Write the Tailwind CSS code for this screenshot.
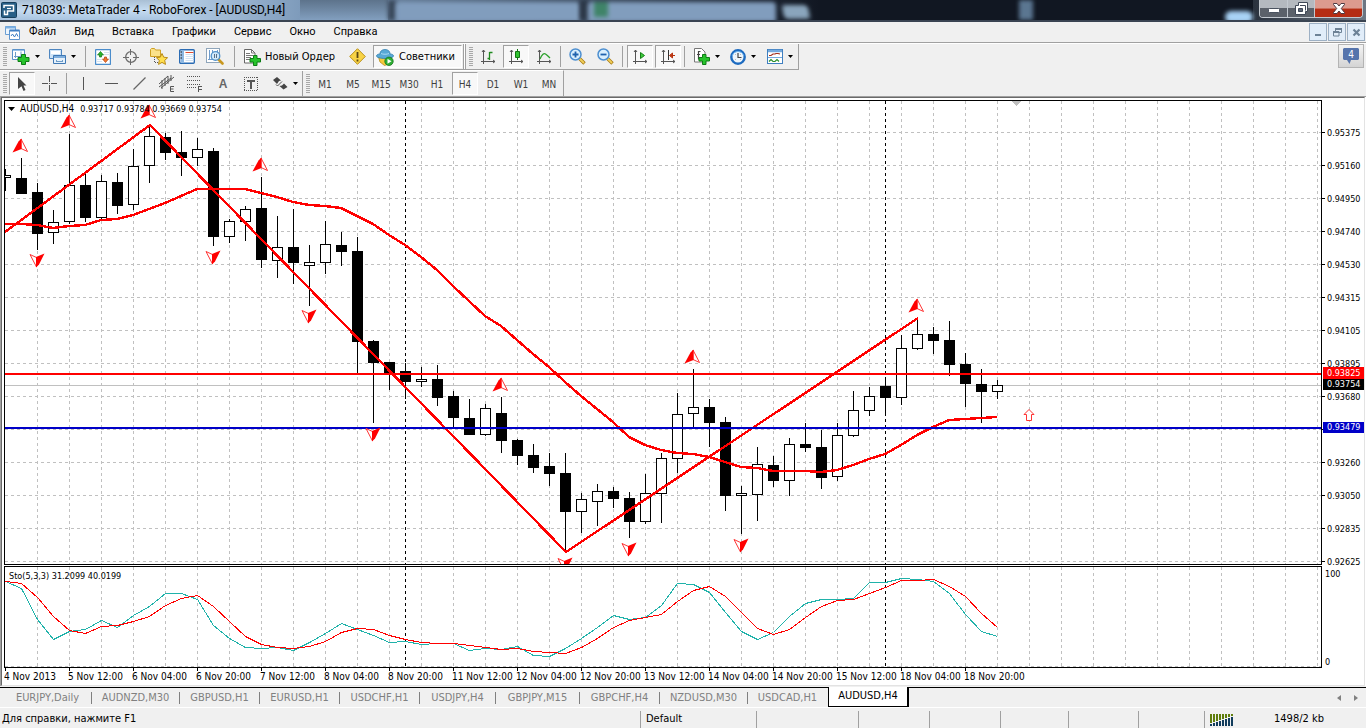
<!DOCTYPE html>
<html lang="ru">
<head>
  <meta charset="UTF-8">
  <meta name="viewport" content="width=device-width, initial-scale=1.0">
  <title>718039: MetaTrader 4 - RoboForex - [AUDUSD,H4]</title>
  <script src="https://cdn.jsdelivr.net/npm/@tailwindcss/browser@4"></script>
</head>
<body class="flex min-h-screen flex-col overflow-hidden bg-[#f0f0f0] font-['DejaVu_Sans_Condensed','DejaVu_Sans',sans-serif] text-[11px] text-black">

  <!-- Title bar -->
  <header class="relative flex h-[22px] items-center justify-between overflow-hidden border-b-2 border-[#3a4452] bg-[#111722]">
    <!-- Blurred browser tabs behind the glass -->
    <div class="absolute inset-0 flex bg-linear-to-r from-[#7e9bbb] from-20% to-transparent to-60%" aria-hidden="true">
      <div class="h-full w-[170px] bg-linear-to-b from-[#a9bfd4] via-[#c6dcf1] to-[#a8c4e0]"></div>
      <div class="h-full w-[130px] bg-linear-to-r from-[#b9d1e8] to-[#7e9bbb]"></div>
      <div class="h-full w-[88px] bg-linear-to-b from-[#5d738b] to-[#829fbf]"></div>
      <div class="h-full w-[8px] bg-[#39475a] blur-[2px]"></div>
      <div class="mt-[2px] h-full w-[184px] rounded-t bg-[#819dbd] blur-[2px]"></div>
      <div class="h-full w-[8px] bg-[#2b3646] blur-[2px]"></div>
      <div class="mt-[2px] flex h-full w-[188px] rounded-t bg-[#819dbd] blur-[2px]"><span class="ml-[6px] h-[15px] w-[14px] bg-[#3f8468]"></span></div>
      <div class="mt-[5px] ml-[7px] h-[14px] w-[26px] skew-x-12 rounded bg-[#8aa5bc] blur-[2px]"></div>
      <div class="ml-[210px] h-full w-[14px] bg-[#5b7691] blur-[2px]"></div>
      <div class="mt-[11px] ml-[192px] h-[12px] w-[28px] rounded-full bg-[#a8d2f5] blur-[2px]"></div>
      <div class="h-full flex-1 bg-linear-to-r from-[#2a323e] to-[#6d7784]"></div>
    </div>
    <div class="relative flex items-center">
      <svg class="ml-px h-[16px] w-[16px]" viewBox="0 0 16 16">
        <rect x=".5" y=".5" width="15" height="15" rx="1" fill="#275f87" stroke="#173f5c"/>
        <path d="M3 6V3.500h9.500v5.500H6.500v3.500H3.500V8.500" fill="none" stroke="#fff" stroke-width="1.5"/>
        <path d="M6 6.500h4" stroke="#fff" stroke-width="1.2"/>
      </svg>
      <h1 class="ml-[5px] font-[Roboto,sans-serif] text-[12px] leading-[16px] whitespace-nowrap">718039: MetaTrader 4 - RoboForex - [AUDUSD,H4]</h1>
    </div>
    <div class="relative mr-[3px] flex h-[18px] self-start overflow-hidden rounded-b-[4px] border border-t-0 border-[#c3c9d0] bg-[#3c424b]">
      <button aria-label="Minimize" class="flex w-[28px] items-center justify-center border-r border-[#c3c9d0] bg-linear-to-b from-[#b4b9bf] from-50% to-[#5b616a] to-50%">
        <svg class="mt-[4px] h-[5px] w-[12px]" viewBox="0 0 12 5"><rect x=".5" y=".5" width="11" height="4" rx="1" fill="#fff" stroke="#4a5360"/></svg>
      </button>
      <button aria-label="Restore" class="flex w-[27px] items-center justify-center border-r border-[#c3c9d0] bg-linear-to-b from-[#b4b9bf] from-50% to-[#5b616a] to-50%">
        <svg class="h-[13px] w-[13px]" viewBox="0 0 13 13"><path d="M3.500.5h9v9h-2v3h-10v-9h3z" fill="#fff" stroke="#3f4857"/><path d="M3.500 6.500h4v3h-4z" fill="#5f6878" stroke="#3f4857"/><path d="M5 3.500h5.500v5" fill="none" stroke="#3f4857"/></svg>
      </button>
      <button aria-label="Close" class="flex w-[47px] items-center justify-center bg-linear-to-b from-[#dc9a8e] from-45% to-[#b52d14] to-55%">
        <svg class="h-[11px] w-[12px]" viewBox="0 0 12 11"><path d="M.5.5h3.500L6 3 8 .5h3.500v1L8.300 5.500l3.200 4v1H8l-2-2.500-2 2.500H.5v-1l3.200-4L.5 1.500z" fill="#fff" stroke="#4c3a42"/></svg>
      </button>
    </div>
  </header>

  <!-- Menu -->
  <nav class="flex h-[21px] items-center border-b border-[#a0a0a0] font-[Roboto,sans-serif] text-[11px]">
    <svg class="ml-[5px] h-[15px] w-[15px]" viewBox="0 0 15 15">
      <path d="M.5 1.500h10v8H.5z" fill="#eef6fd" stroke="#6b9fd4"/><path d="M.5 1.500h10v2H.5z" fill="#7db0e2"/>
      <path d="M4.500 5.500h10v9h-10z" fill="#fff" stroke="#5d95cf"/><path d="M4.500 5.500h10" stroke="#3f7fc4" stroke-width="2"/>
      <path d="M6 11l1.500-2 2 3 2-3.500 1.500 3" fill="none" stroke="#3f7fc4"/>
    </svg>
    <div class="flex flex-1">
      <a href="#" class="px-[9px]">Файл</a>
      <a href="#" class="px-[9px]">Вид</a>
      <a href="#" class="px-[9px]">Вставка</a>
      <a href="#" class="px-[9px]">Графики</a>
      <a href="#" class="px-[9px]">Сервис</a>
      <a href="#" class="px-[9px]">Окно</a>
      <a href="#" class="px-[9px]">Справка</a>
    </div>
    <div class="flex gap-px">
      <button aria-label="Minimize chart" class="flex h-[18px] w-[18px] items-center justify-center border border-[#9db0c4] bg-[#e1edf9]"><svg class="h-[9px] w-[9px]" viewBox="0 0 9 9"><path d="M1 7h6" stroke="#6d8296" stroke-width="2"/></svg></button>
      <button aria-label="Restore chart" class="flex h-[18px] w-[18px] items-center justify-center border border-[#9db0c4] bg-[#e1edf9]"><svg class="h-[9px] w-[9px]" viewBox="0 0 9 9"><path d="M2.500 3V.5h6v4H6M.5 3.500h5.500v4.500H.5z" fill="none" stroke="#6d8296"/><path d="M2 1h7M0 4h6" stroke="#6d8296" stroke-width="2"/></svg></button>
      <button aria-label="Close chart" class="mr-px flex h-[18px] w-[18px] items-center justify-center border border-[#9db0c4] bg-[#e1edf9]"><svg class="h-[9px] w-[9px]" viewBox="0 0 9 9"><path d="M1.500 1.500l6 6M7.500 1.500l-6 6" stroke="#6d8296" stroke-width="2.200"/></svg></button>
    </div>
  </nav>

  <!-- Toolbars -->
  <div class="flex justify-between border-t border-white">
    <div class="flex flex-col items-start">
      <div class="flex h-[26px] items-stretch border-r border-b border-[#a0a0a0] pr-[2px]">
        <span class="my-[3px] ml-[3px] w-[4px] bg-[repeating-linear-gradient(#a8a8a8_0_1px,#f0f0f0_1px_2px)]"></span>
        <button aria-label="New chart" class="flex w-[37px] items-center gap-[5px] pl-[5px]">
          <svg class="h-[17px] w-[18px]" viewBox="0 0 18 17"><path d="M.5 1.500h12v10H.5z" fill="#fff" stroke="#5b92c9"/><path d="M1 2.500h11" stroke="#9cc3e8"/><path d="M3.500 4v6M2 8.500h8M9 3.500v5" stroke="#6d9cc8"/><path d="M9.500 6.500h4v3h3.500v4h-3.500v3h-4v-3H6v-4h3.500z" fill="#27c32c" stroke="#0d7d14"/></svg>
          <svg class="h-[3px] w-[5px]" viewBox="0 0 5 3"><path d="M0 0h5L2.500 3z"/></svg>
        </button>
        <button aria-label="Profiles" class="flex w-[37px] items-center gap-[5px] pl-[5px]">
          <svg class="h-[16px] w-[17px]" viewBox="0 0 17 16"><path d="M.5.5h12v9H.5z" fill="#cfe4f7" stroke="#4e86c0"/><path d="M2 3.500h9" stroke="#fff" stroke-width="3"/><path d="M4.500 6.500h12v8h-12z" fill="#e6f1fb" stroke="#3f78b4"/><path d="M5 8h11" stroke="#7eaedd" stroke-width="2"/><path d="M7 12.500h7M7.500 11v2M13.500 11v2" stroke="#6d9cc8"/></svg>
          <svg class="h-[3px] w-[5px]" viewBox="0 0 5 3"><path d="M0 0h5L2.500 3z"/></svg>
        </button>
        <span class="my-[2px] mr-[3px] ml-[4px] w-px bg-[#a0a0a0]"></span>
        <button aria-label="Market watch" class="flex w-7 items-center justify-center">
          <svg class="h-[16px] w-[16px]" viewBox="0 0 16 16"><rect x=".5" y=".5" width="15" height="15" rx="1" fill="#fff" stroke="#4a8ccb" stroke-width="1.400"/><path d="M9 3.500h5M9 5.500h5M2 10.500h5M2 12.500h5" stroke="#d5e3f0"/><path d="M5.500 2.500l3 3.500H6.500v2h-2V6h-2z" fill="#2bb52b" stroke="#12761a" stroke-width=".7"/><path d="M10.500 13.500l3-3.500h-2V8h-2v2h-2z" fill="#ef7a2e" stroke="#b43c10" stroke-width=".7"/></svg>
        </button>
        <button aria-label="Data window" class="flex w-7 items-center justify-center">
          <svg class="h-[16px] w-[16px]" viewBox="0 0 16 16" fill="none" stroke="#6b6b6b"><circle cx="8" cy="8" r="5.300" stroke-width="1.300"/><path d="M7.500 0v6M7.500 10v6M0 8.500h6M10 8.500h6"/></svg>
        </button>
        <button aria-label="Navigator" class="flex w-7 items-center justify-center">
          <svg class="h-[17px] w-[18px]" viewBox="0 0 18 17"><path d="M.5 8.500v-7l1-1h3l1 1.500h5v6.500z" fill="#fbe28a" stroke="#cfa022"/><path d="M4.500 9v5.500h4" fill="none" stroke="#555" stroke-dasharray="1 1"/><path d="M12 5.500l1.700 3.700 3.900.5-2.900 2.700.8 4-3.500-2-3.500 2 .8-4-2.900-2.700 3.900-.5z" fill="#ffdf4f" stroke="#b98a17"/></svg>
        </button>
        <button aria-label="Terminal" class="flex w-7 items-center justify-center">
          <svg class="h-[15px] w-[16px]" viewBox="0 0 16 15"><rect x=".7" y=".7" width="14.600" height="13.600" rx="1" fill="#fff" stroke="#2b6cb4" stroke-width="1.400"/><path d="M3.500 1v13" stroke="#8db8e2" stroke-width="3"/><path d="M1.500 3h1.500M1.500 6h1.500M1.500 9h1.500" stroke="#222"/><path d="M6.500 3.500h8" stroke="#e04b2f"/><path d="M6.500 5.500h8M6.500 7.500h8M6.500 9.500h8M6.500 11.500h8" stroke="#d3e2f2"/></svg>
        </button>
        <button aria-label="Strategy tester" class="flex w-7 items-center justify-center">
          <svg class="h-[17px] w-[18px]" viewBox="0 0 18 17"><rect x=".5" y=".5" width="13" height="14" fill="#fff" stroke="#8fa5ba"/><path d="M3.500 2v10M6.500 2v3M11.500 2v5M2 11.500h10" stroke="#6f9ccc"/><path d="M12.500 11.500l4 4" stroke="#c99820" stroke-width="2.600" stroke-linecap="round"/><circle cx="9.500" cy="8" r="4.300" fill="#cbe6fa" fill-opacity=".85" stroke="#4f90c9" stroke-width="1.300"/><path d="M8.500 6v4M10.500 6v4" stroke="#5a6f86"/></svg>
        </button>
        <span class="my-[2px] mr-[3px] ml-[5px] w-px bg-[#a0a0a0]"></span>
        <button class="flex w-[106px] items-center gap-[4px] pt-px pl-[6px] whitespace-nowrap">
          <svg class="h-[17px] w-[17px]" viewBox="0 0 17 17"><path d="M.5.5h7l3.500 3.500v10H.5z" fill="#fff" stroke="#666"/><path d="M7.500.5V4H11M2 4.500h4M2 6.500h7M2 8.500h5M2 10.500h4" fill="none" stroke="#777"/><path d="M9.500 6.500h3.500v3h3.500v3.500H13v3.500H9.500V13H6V9.500h3.500z" fill="#27c32c" stroke="#0d7d14"/></svg>
          Новый Ордер
        </button>
        <button aria-label="MetaEditor" class="flex w-[26px] items-center justify-center">
          <svg class="h-[17px] w-[17px]" viewBox="0 0 17 17"><path d="M8.500.7l7.800 7.800-7.800 7.800L.7 8.500z" fill="#f8d345" stroke="#b8901c"/><path d="M8.500 4v6M8.500 11.500v2" stroke="#5b4712" stroke-width="1.800"/></svg>
        </button>
        <button class="my-px ml-[3px] flex w-[89px] items-center gap-[5px] border border-r-white border-b-white border-l-[#a0a0a0] border-t-[#a0a0a0] bg-[#f8f8f8] pt-px pl-[2px]">
          <svg class="h-[17px] w-[18px]" viewBox="0 0 18 17"><path d="M2.500 8l1.500 5 4.500 3.500 4-1.500 3-7z" fill="#f3c93b" stroke="#b98e1c" stroke-width=".8"/><path d="M4 5C4 1.500 7 .5 9 .5S14 1.500 14 5c2 0 3.500.8 3.500 2 0 1.500-4 2.500-8.500 2.500S.5 8.500.5 7C.5 5.800 2 5 4 5z" fill="#58a9d6" stroke="#2d7cad" stroke-width=".8"/><path d="M5 4.500c2 1 6 1 8 0" stroke="#a8daf3" fill="none"/><circle cx="13" cy="12.300" r="4.200" fill="#2eae34" stroke="#15761c" stroke-width=".8"/><path d="M11.500 9.800l4 2.500-4 2.500z" fill="#fff"/></svg>
          Советники
        </button>
        <span class="ml-px w-[3px] border-x border-[#a0a0a0] bg-white"></span>
        <span class="my-[3px] ml-[3px] w-[4px] bg-[repeating-linear-gradient(#a8a8a8_0_1px,#f0f0f0_1px_2px)]"></span>
        <button aria-label="Bar chart" class="flex w-[30px] items-center justify-center">
          <svg class="h-[15px] w-[15px]" viewBox="0 0 15 15" fill="none" stroke="#555"><path d="M2.500 1v14M0 12.500h14M1 3l1.500-2L4 3M12 11l2 1.500-2 1.500"/><path d="M8.500 3v8M6.500 9.500h2M8.500 3.500h3" stroke="#1f8a1f" stroke-width="1.300"/></svg>
        </button>
        <button aria-label="Candlesticks" class="my-px flex w-[26px] items-center justify-center border border-r-white border-b-white border-l-[#a0a0a0] border-t-[#a0a0a0] bg-[#f8f8f8]">
          <svg class="h-[15px] w-[15px]" viewBox="0 0 15 15" fill="none" stroke="#555"><path d="M2.500 1v14M0 12.500h14M1 3l1.500-2L4 3M12 11l2 1.500-2 1.500"/><path d="M8.500 0v11" stroke="#117511"/><path d="M6.500 2.500h4v6h-4z" fill="#2fc22f" stroke="#117511"/></svg>
        </button>
        <button aria-label="Line chart" class="flex w-[30px] items-center justify-center">
          <svg class="h-[15px] w-[15px]" viewBox="0 0 15 15" fill="none" stroke="#555"><path d="M2.500 1v14M0 12.500h14M1 3l1.500-2L4 3M12 11l2 1.500-2 1.500"/><path d="M3 10c2-5 4-6 5.500-5S12 8 13 9" stroke="#2ba02b" stroke-width="1.300"/></svg>
        </button>
        <span class="my-[2px] mr-[2px] ml-px w-px bg-[#a0a0a0]"></span>
        <button aria-label="Zoom in" class="flex w-7 items-center justify-center">
          <svg class="h-[17px] w-[17px]" viewBox="0 0 17 17"><path d="M10.500 10.500l5 5" stroke="#a87a14" stroke-width="3.400"/><path d="M10.500 10.500l4.500 4.500" stroke="#f1cf5a" stroke-width="1.800"/><circle cx="6.500" cy="6.500" r="5.500" fill="#d9effd" stroke="#4d8fd0" stroke-width="1.500"/><path d="M3.500 6.500h6M6.500 3.500v6" stroke="#1f62ad" stroke-width="1.800"/></svg>
        </button>
        <button aria-label="Zoom out" class="flex w-7 items-center justify-center">
          <svg class="h-[17px] w-[17px]" viewBox="0 0 17 17"><path d="M10.500 10.500l5 5" stroke="#a87a14" stroke-width="3.400"/><path d="M10.500 10.500l4.500 4.500" stroke="#f1cf5a" stroke-width="1.800"/><circle cx="6.500" cy="6.500" r="5.500" fill="#d9effd" stroke="#4d8fd0" stroke-width="1.500"/><path d="M3.500 6.500h6" stroke="#1f62ad" stroke-width="1.800"/></svg>
        </button>
        <span class="my-[2px] mr-[4px] ml-[3px] w-px bg-[#a0a0a0]"></span>
        <button aria-label="Auto scroll" class="my-px flex w-[26px] items-center justify-center border border-r-white border-b-white border-l-[#a0a0a0] border-t-[#a0a0a0] bg-[#f8f8f8]">
          <svg class="h-[15px] w-[15px]" viewBox="0 0 15 15" fill="none" stroke="#555"><path d="M2.500 1v14M0 12.500h14M1 3l1.500-2L4 3M12 11l2 1.500-2 1.500"/><path d="M7.500 3.500v6l4-3z" fill="#3ccc3c" stroke="#158015"/></svg>
        </button>
        <button aria-label="Chart shift" class="my-px ml-[2px] flex w-[26px] items-center justify-center border border-r-white border-b-white border-l-[#a0a0a0] border-t-[#a0a0a0] bg-[#f8f8f8]">
          <svg class="h-[15px] w-[15px]" viewBox="0 0 15 15" fill="none" stroke="#555"><path d="M2.500 1v14M0 12.500h14M1 3l1.500-2L4 3M12 11l2 1.500-2 1.500"/><path d="M7.500 1v10" stroke="#333"/><path d="M14 6.500H9.500M11.500 4v5l-3-2.500z" fill="#d8441f" stroke="#b5330f"/></svg>
        </button>
        <span class="my-[2px] mr-[3px] ml-[3px] w-px bg-[#a0a0a0]"></span>
        <button aria-label="Indicators" class="flex w-[36px] items-center gap-[5px] pl-[6px]">
          <svg class="h-[17px] w-[16px]" viewBox="0 0 16 17"><path d="M.5.5h7l3.500 3.500v10H.5z" fill="#fff" stroke="#777"/><path d="M6.500 3.500h-2v8M3 6.500h3" fill="none" stroke="#444" stroke-width="1.200"/><path d="M8.500 6.500H12v3h3.500v3.500H12v3.500H8.500V13H5V9.500h3.500z" fill="#27c32c" stroke="#0d7d14"/></svg>
          <svg class="h-[3px] w-[5px]" viewBox="0 0 5 3"><path d="M0 0h5L2.500 3z"/></svg>
        </button>
        <button aria-label="Periods" class="flex w-[37px] items-center gap-[5px] pl-[6px]">
          <svg class="h-[16px] w-[16px]" viewBox="0 0 16 16"><circle cx="8" cy="8" r="6.700" fill="#eef5fb" stroke="#1d6bc0" stroke-width="2.400"/><path d="M2.200 7a6 6 0 0 1 11.600 0" fill="none" stroke="#6fb4f0"/><path d="M8 4v4.500h3.500" fill="none" stroke="#444" stroke-width="1.200"/><path d="M5 5l.5.5M11 5l-.5.5M5 11l.5-.5M11 11l-.5-.5" stroke="#888"/></svg>
          <svg class="h-[3px] w-[5px]" viewBox="0 0 5 3"><path d="M0 0h5L2.500 3z"/></svg>
        </button>
        <button aria-label="Templates" class="flex w-[35px] items-center gap-[5px] pl-[6px]">
          <svg class="h-[15px] w-[16px]" viewBox="0 0 16 15"><rect x=".5" y=".5" width="15" height="14" fill="#fff" stroke="#3f7fc0"/><path d="M1 2h14" stroke="#75aade" stroke-width="2.500"/><path d="M1 8.500h14" stroke="#75aade"/><path d="M2 6.500h2l2-1.500h2l1-.5h2l2 .5" fill="none" stroke="#a3301c" stroke-width="1.200"/><path d="M2 12.500l2-2 2 2h2l2-2 2 2" fill="none" stroke="#2a8f2a" stroke-width="1.200"/></svg>
          <svg class="h-[3px] w-[5px] shrink-0" viewBox="0 0 5 3"><path d="M0 0h5L2.500 3z"/></svg>
        </button>
      </div>
      <div class="flex h-[26px] items-stretch border-t border-r border-t-white border-r-[#a0a0a0] text-[10px] text-[#404040]">
        <span class="my-[3px] ml-[3px] w-[4px] bg-[repeating-linear-gradient(#a8a8a8_0_1px,#f0f0f0_1px_2px)]"></span>
        <button aria-label="Cursor" class="my-px ml-[2px] flex w-[26px] items-center justify-center border border-r-white border-b-white border-l-[#a0a0a0] border-t-[#a0a0a0] bg-[#f8f8f8]">
          <svg class="h-[14px] w-[9px]" viewBox="0 0 9 14"><path d="M0 0l8.500 8.500H5.500l2 4.500-2 1-2-4.700L0 12z" fill="#444"/></svg>
        </button>
        <button aria-label="Crosshair" class="flex w-7 items-center justify-center">
          <svg class="h-[15px] w-[15px]" viewBox="0 0 15 15"><path d="M7.500 0v6M7.500 9v6M0 7.500h6M9 7.500h6M7 7.500h1" stroke="#555"/></svg>
        </button>
        <span class="my-[2px] mr-[2px] ml-[3px] w-px bg-[#a0a0a0]"></span>
        <button aria-label="Vertical line" class="flex w-7 items-center justify-center"><svg class="h-[13px] w-[13px]" viewBox="0 0 13 13"><path d="M6.500 0v13" stroke="#555"/></svg></button>
        <button aria-label="Horizontal line" class="flex w-7 items-center justify-center"><svg class="h-[13px] w-[13px]" viewBox="0 0 13 13"><path d="M0 6.500h13" stroke="#555"/></svg></button>
        <button aria-label="Trendline" class="flex w-7 items-center justify-center"><svg class="h-[13px] w-[13px]" viewBox="0 0 13 13"><path d="M.5 12.500l12-12" stroke="#666" stroke-width="1.200"/></svg></button>
        <button aria-label="Equidistant channel" class="flex w-7 items-center justify-center">
          <svg class="h-[17px] w-[16px]" viewBox="0 0 16 17" fill="none" stroke="#555"><path d="M0 9L9 1M2 13L15 2M0 12L12 3" /><path d="M3 5v9M6 3v8M9 1v8M12 0v6"/><path d="M15 11.500h-3.500v5H15M11.500 14h3"/></svg>
        </button>
        <button aria-label="Fibonacci retracement" class="flex w-7 items-center justify-center">
          <svg class="h-[17px] w-[16px]" viewBox="0 0 16 17" fill="none" stroke="#555" shape-rendering="crispEdges"><path d="M0 1.500h14M0 5.500h14M0 9.500h14M0 12.500h9" stroke-dasharray="1 1"/><path d="M15 11.500h-3.500v5.500M11.500 14.500h3"/></svg>
        </button>
        <button aria-label="Text" class="w-7 font-['Liberation_Sans',sans-serif] text-[12px] font-bold text-[#666]">A</button>
        <button aria-label="Text label" class="flex w-7 items-center justify-center">
          <svg class="h-[14px] w-[14px]" viewBox="0 0 14 14" fill="none" stroke="#555" shape-rendering="crispEdges"><path d="M0 .5h14M0 13.500h14M.5 0v14M13.500 0v14" stroke-dasharray="1 1"/><path d="M3 4h8M7 3v9" stroke-width="2"/></svg>
        </button>
        <button aria-label="Arrows" class="flex w-[37px] items-center gap-[5px] pl-[8px]">
          <svg class="h-[13px] w-[15px]" viewBox="0 0 15 13" fill="#444"><path d="M4 0l4 3.500-2 .5-2 3-4-4zM10.500 12.500l-4-3.500 2.500-.5 2-2 3.500 3.500z"/><path d="M3 7.500l1.500 1.500L9 4.500" fill="none" stroke="#555"/></svg>
          <svg class="h-[3px] w-[5px]" viewBox="0 0 5 3"><path d="M0 0h5L2.500 3z" fill="#000"/></svg>
        </button>
        <span class="w-px bg-[#a0a0a0]"></span>
        <span class="my-[3px] mr-px ml-[3px] w-[4px] bg-[repeating-linear-gradient(#a8a8a8_0_1px,#f0f0f0_1px_2px)]"></span>
        <button class="w-7 pt-px">M1</button>
        <button class="w-7 pt-px">M5</button>
        <button class="w-7 pt-px">M15</button>
        <button class="w-7 pt-px">M30</button>
        <button class="w-7 pt-px">H1</button>
        <button class="mx-px my-px w-[26px] border border-r-white border-b-white border-l-[#a0a0a0] border-t-[#a0a0a0] bg-[#f8f8f8] pt-px">H4</button>
        <button class="w-7 pt-px">D1</button>
        <button class="w-7 pt-px">W1</button>
        <button class="w-7 pt-px">MN</button>
      </div>
    </div>
    <button aria-label="Messages" class="mr-[2px] flex h-[24px] w-[26px] items-center justify-center border border-[#b4b4b4] bg-linear-to-b from-[#f4f4f4] to-[#d4d4d4]">
      <svg class="h-[16px] w-[16px]" viewBox="0 0 16 16"><path d="M1 0h14l1 1v10l-1 1H8l-1.500 4L4 12H1l-1-1V1z" fill="#5674ac"/><text x="8" y="10" font-size="10" text-anchor="middle" fill="#fff">4</text></svg>
    </button>
  </div>

  <!-- Chart window -->
  <main class="flex flex-1 flex-col border-t border-l border-[#a0a0a0] bg-white">
    <div class="mr-px flex flex-1 flex-col border-t border-r border-b border-l border-t-[#696969] border-r-[#e3e3e3] border-b-[#e3e3e3] border-l-[#696969] pt-[2px] pl-[2px] text-[9px]">
      <section class="flex h-[465px]">
        <div class="relative flex-1 border border-black">
          <svg id="price" class="block h-full w-full" shape-rendering="crispEdges"></svg>
          <p class="absolute top-[2px] left-[3px] flex items-center leading-[12px]"><svg class="mr-[5px] h-[4px] w-[7px]" viewBox="0 0 7 4"><path d="M0 0h7L3.500 4z"/></svg><span class="mr-[6px] text-[10px]">AUDUSD,H4</span>0.93717 0.93784 0.93669 0.93754</p>
        </div>
        <div id="scale" class="relative w-[42px] pt-[16px]">
          <p class="absolute top-[267px] left-px w-[41px] bg-[#ff0000] pl-[4px] leading-[12px] text-white">0.93825</p>
          <p class="absolute top-[279px] left-px w-[41px] bg-black pl-[4px] leading-[11px] text-white">0.93754</p>
          <p class="absolute top-[322px] left-px w-[41px] bg-[#0000c8] pl-[4px] leading-[11px] text-white">0.93479</p>
        </div>
      </section>
      <section class="mt-px flex h-[102px]">
        <div class="relative flex-1 border border-black">
          <svg id="sto" class="block h-full w-full" shape-rendering="crispEdges"></svg>
          <p class="absolute top-[3px] left-[4px] leading-[12px]">Sto(5,3,3) 31.2099 40.0199</p>
        </div>
        <div class="flex w-[42px] flex-col justify-between pt-[2px] pl-[3px] leading-[12px]"><span>100</span><span>0</span></div>
      </section>
      <div id="dates" class="flex flex-1 items-start text-[10px]"></div>
    </div>
  </main>

  <!-- Chart tabs -->
  <div class="mt-px flex h-[20px] border-t border-black pl-[4px] text-[#808080]">
    <div class="flex items-center *:border-r *:border-[#808080] *:leading-[12px] *:last:border-transparent">
      <button class="w-[88px]">EURJPY,Daily</button>
      <button class="w-[88px]">AUDNZD,M30</button>
      <button class="w-20">GBPUSD,H1</button>
      <button class="w-20">EURUSD,H1</button>
      <button class="w-20">USDCHF,H1</button>
      <button class="w-[76px]">USDJPY,H4</button>
      <button class="w-[84px]">GBPJPY,M15</button>
      <button class="w-20">GBPCHF,H4</button>
      <button class="w-[88px]">NZDUSD,M30</button>
      <button class="w-20">USDCAD,H1</button>
    </div>
    <button class="-mt-px flex w-[81px] items-center justify-center border-r-2 border-b border-l border-black bg-white text-black">AUDUSD,H4</button>
    <span class="flex flex-1 items-center justify-end gap-[13px] pr-[8px]">
      <button aria-label="Scroll left"><svg class="h-[6px] w-[4px]" viewBox="0 0 4 6"><path d="M4 0v6L0 3z" fill="#808080"/></svg></button>
      <button aria-label="Scroll right"><svg class="h-[6px] w-[4px]" viewBox="0 0 4 6"><path d="M0 0v6l4-3z" fill="#808080"/></svg></button>
    </span>
  </div>

  <!-- Status bar -->
  <footer class="flex h-[21px] items-stretch border-t border-white pt-[3px] whitespace-nowrap">
    <span class="flex flex-1 items-center pl-[2px]">Для справки, нажмите F1</span>
    <span class="flex w-[116px] items-center border-l border-[#a0a0a0] pl-[5px]">Default</span>
    <span class="w-[102px] border-l border-[#a0a0a0]"></span>
    <span class="w-[71px] border-l border-[#a0a0a0]"></span>
    <span class="w-[71px] border-l border-[#a0a0a0]"></span>
    <span class="w-[68px] border-l border-[#a0a0a0]"></span>
    <span class="w-[70px] border-l border-[#a0a0a0]"></span>
    <span class="w-[66px] border-l border-[#a0a0a0]"></span>
    <span class="flex w-[162px] items-center border-l border-[#a0a0a0] pl-[5px]">
      <svg class="mr-[41px] h-[12px] w-[23px]" viewBox="0 0 23 12" shape-rendering="crispEdges">
        <path d="M0 0h2v9H0zM3 0h2v8H3zM6 0h2v7H6zM9 0h2v6H9zM12 0h2v5h-2zM15 0h2v4h-2zM18 0h2v3h-2zM21 0h2v2h-2z" fill="#5f7d0c"/>
        <path d="M0 10h2v2H0zM3 9h2v3H3zM6 8h2v4H6zM9 7h2v5H9zM12 6h2v6h-2zM15 5h2v7h-2zM18 4h2v8h-2zM21 3h2v9h-2z" fill="#123c5c"/>
      </svg>
      1498/2 kb
    </span>
  </footer>

  <script>
    // Window coordinates of the inner corner of each pane
    const LEFT = 5, TOP = 101, STO_TOP = 567;
    const STEP = 16;

    // high, body top, body bottom, low, filled
    const candles = [
      [169,175,177,190,0],[158,178,193,193,1],[183,192,233,249,1],[210,222,232,243,0],[134,185,221,223,0],
      [173,185,217,221,1],[175,181,217,219,0],[173,182,205,213,1],[149,166,204,209,0],[125,136,165,182,0],
      [133,137,152,159,1],[131,152,157,175,1],[138,149,157,165,0],[148,151,236,245,1],[219,221,236,242,0],
      [206,209,221,240,0],[177,208,259,267,1],[216,247,260,277,0],[209,247,262,283,1],[245,262,265,305,0],
      [221,244,262,273,0],[232,245,251,265,1],[237,251,341,373,1],[340,341,362,422,1],[362,362,373,389,1],
      [363,371,381,398,1],[367,379,381,386,0],[365,379,397,405,1],[391,396,417,427,1],[399,418,434,434,1],
      [404,408,434,435,0],[397,413,440,452,1],[439,440,455,464,1],[444,455,467,472,1],[453,466,473,485,1],
      [453,473,511,551,1],[493,499,511,532,0],[484,491,501,525,0],[487,491,498,507,1],[492,498,521,537,1],
      [474,493,521,523,0],[453,458,493,522,0],[393,414,458,472,0],[369,407,413,426,0],[399,407,422,446,1],
      [417,422,495,510,1],[486,493,495,533,0],[447,464,494,520,0],[456,465,480,486,1],[438,444,480,495,0],
      [423,444,447,451,1],[430,447,477,488,1],[423,435,476,480,0],[391,410,435,436,0],[387,396,410,415,0],
      [380,386,397,414,1],[335,348,397,404,0],[320,334,348,349,0],[327,334,340,353,1],[321,340,364,375,1],
      [353,364,383,406,1],[369,384,391,422,1],[380,385,391,398,0]
    ];
    const average = [224,224,225,228,226,225,220,219,215,209,203,196,189,189,189,189,193,197,202,205,206,208,216,224,
      235,245,257,270,286,301,316,326,340,354,367,382,396,409,422,437,445,450,453,454,457,462,467,468,471,471,471,472,
      470,465,459,454,445,435,427,420,419,418,417];
    const stoMain = [581,588,619,639,631,629,620,627,615,606,593,593,599,625,638,647,648,647,650,642,633,623,629,635,
      642,641,644,643,643,650,648,649,646,655,656,648,638,627,615,619,617,605,583,584,592,612,631,639,632,616,603,599,
      599,598,582,582,578,579,581,593,614,631,636];
    const stoSignal = [581,583,597,616,630,633,626,625,621,616,605,598,595,606,621,636,644,647,648,646,641,632,628,629,
      635,639,642,643,643,645,647,649,648,651,652,653,647,638,627,620,617,614,601,590,586,596,612,628,634,629,617,606,
      600,599,593,587,580,580,579,586,596,613,627];
    const fractalsUp = [[20,139],[68,115],[148,105],[260,158],[500,378],[692,350],[916,299]];
    const fractalsDown = [[37,267],[213,264],[309,323],[373,441],[565,571],[629,556],[741,552]];

    // Vertical grid and day separators, shared by both panes
    function grid(id) {
      let out = `<defs><pattern id="${id}" width="32" height="6" patternUnits="userSpaceOnUse"><rect width="1" height="3" fill="#c0c0c0"/></pattern></defs>`;
      out += `<rect x="1" y="0" width="100%" height="100%" fill="url(#${id})"/>`;
      for (const x of [400.5, 880.5]) {
        out += `<line x1="${x}" y1="0" x2="${x}" y2="100%" stroke="#000" stroke-dasharray="3 3"/>`;
      }
      return out;
    }

    function polyline(values, top, color, w) {
      const shift = w === 1 ? 0.5 : 0;
      const points = values.map((y, i) => `${i * STEP + shift},${y - top + shift}`).join(" ");
      return `<polyline points="${points}" fill="none" stroke="${color}" stroke-width="${w}"/>`;
    }

    function drawPrice() {
      let out = grid("priceGrid");
      for (let y = 31.5; y < 463; y += 33) {
        out += `<line x1="0" y1="${y}" x2="100%" y2="${y}" stroke="#c0c0c0" stroke-dasharray="3 3"/>`;
      }
      out += `<line x1="0" y1="284.5" x2="100%" y2="284.5" stroke="#c0c0c0"/>`;
      candles.forEach(([high, top, bottom, low, filled], i) => {
        const x = i * STEP + 0.5;
        out += `<line x1="${x}" y1="${high - TOP}" x2="${x}" y2="${low - TOP + 1}" stroke="#000"/>`;
        out += `<rect x="${x - 5}" y="${top - TOP + 0.5}" width="10" height="${bottom - top}" fill="${filled ? "#000" : "#fff"}" stroke="#000"/>`;
      });
      out += polyline(average, TOP, "#f00", 2.4);
      out += `<polyline points="0,131 145,24 561,451 913,217" fill="none" stroke="#f00" stroke-width="2.4"/>`;
      out += `<line x1="0" y1="273" x2="100%" y2="273" stroke="#f00" stroke-width="2"/>`;
      out += `<line x1="0" y1="327" x2="100%" y2="327" stroke="#0000c8" stroke-width="2"/>`;
      for (const [x, y] of fractalsUp) {
        out += `<g transform="translate(${x - LEFT} ${y - TOP})" shape-rendering="auto"><path d="M1 0L7.500 12.500L1 9.500z" fill="#fff" stroke="#f33"/><path d="M1.500 -.5L-1.500 2.500L-7.500 13.500L1.500 10z" fill="#f00"/></g>`;
      }
      for (const [x, y] of fractalsDown) {
        out += `<g transform="translate(${x - LEFT} ${y - TOP})" shape-rendering="auto"><path d="M-.5 0L-7 -12.500L-.5 -9.500z" fill="#fff" stroke="#f33"/><path d="M-1 .5L2 -2.500L7.500 -13.500L-1 -10z" fill="#f00"/></g>`;
      }
      out += `<path d="M1024 308.500l5 5h-2.500v6h-5v-6h-2.500z" fill="#fff" stroke="#f33" shape-rendering="auto"/>`;
      out += `<path d="M1006 0h11l-5.500 5z" fill="#c0c0c0"/>`;
      document.getElementById("price").innerHTML = out;
    }

    function drawSto() {
      document.getElementById("sto").innerHTML = grid("stoGrid") +
        `<line x1="0" y1="99.5" x2="100%" y2="99.5" stroke="#c0c0c0" stroke-dasharray="3 3"/>` +
        polyline(stoMain, STO_TOP, "#20b2aa", 1) +
        polyline(stoSignal, STO_TOP, "#f00", 1);
    }

    const prices = ["0.95375","0.95160","0.94950","0.94740","0.94530","0.94315","0.94105","0.93895","0.93680","","0.93260","0.93050","0.92835","0.92625"];
    document.getElementById("scale").insertAdjacentHTML("afterbegin", prices.map((p) =>
      `<div class="flex h-[33px] items-center gap-[2px] leading-[12px]"><span class="h-px w-[3px] bg-black"></span>${p}</div>`
    ).join(""));

    const dates = ["4 Nov 2013","5 Nov 12:00","6 Nov 04:00","6 Nov 20:00","7 Nov 12:00","8 Nov 04:00","8 Nov 20:00","11 Nov 12:00",
      "12 Nov 04:00","12 Nov 20:00","13 Nov 12:00","14 Nov 04:00","14 Nov 20:00","15 Nov 12:00","18 Nov 04:00","18 Nov 20:00"];
    document.getElementById("dates").innerHTML = dates.map((d) =>
      `<div class="w-16 leading-[12px] whitespace-nowrap"><span class="ml-px block h-[3px] w-px bg-black"></span>${d}</div>`
    ).join("");

    drawPrice();
    drawSto();
  </script>
</body>
</html>
